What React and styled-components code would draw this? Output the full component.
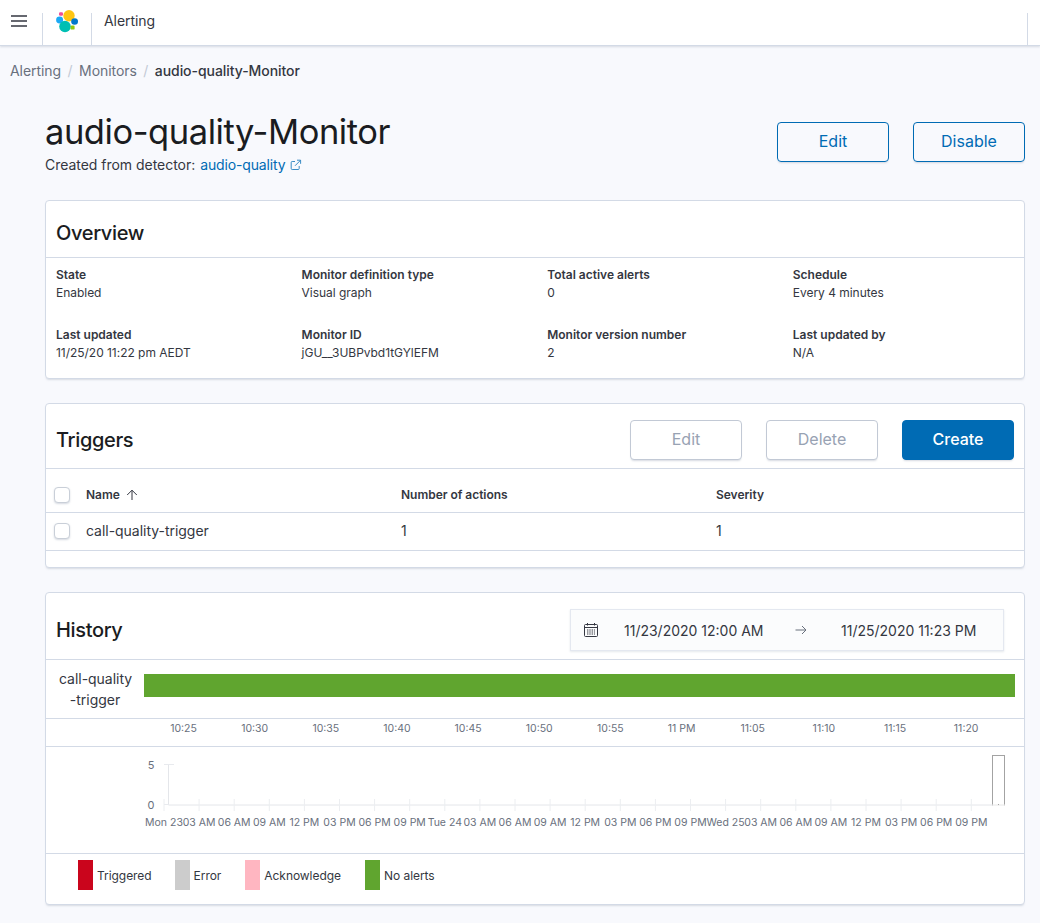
import React from 'react';
import styled, { createGlobalStyle } from 'styled-components';

const Global = createGlobalStyle`
  html, body { margin: 0; padding: 0; background: #f8f9fd; }
  body { font-family: Inter, "Noto Sans", sans-serif; color: #343741; -webkit-font-smoothing: antialiased; }
  * { box-sizing: border-box; }
`;

const Page = styled.div`width: 1040px; height: 923px; overflow: hidden; background: #f8f9fd;`;

const Header = styled.header`
  height: 46px; background: #fff; border-bottom: 1px solid #d3dae6;
  box-shadow: 0 1px 2px rgba(152,162,179,.35); display: flex; align-items: stretch;
`;
const HeaderCell = styled.div`
  width: ${p => p.$w}px; margin-top: 13px; border-right: 1px solid #d3dae6;
  display: flex; align-items: flex-start; justify-content: ${p => p.$start ? 'flex-start' : 'center'};
  padding-left: ${p => p.$start ? 11 : 0}px;
`;
const HeaderTitle = styled.div`
  flex: 1; font-size: 14px; line-height: 17px; padding-left: 12px; color: #343741; letter-spacing: -0.05px;
  border-right: 1px solid #d3dae6; margin-top: 13px; margin-right: 12px;
`;
const HeaderText = styled.span`display: block; margin-top: -1px;`;

const Crumbs = styled.nav`display: flex; align-items: center; padding: 15px 10px 0; font-size: 14px; line-height: 17px; color: #69707d; height: 34px; letter-spacing: -0.06px;`;
const Crumb = styled.span`color: ${p => p.$cur ? '#343741' : '#69707d'}; font-weight: ${p => p.$cur ? 500 : 400};`;
const Slash = styled.span`color: #c2c9d5; margin: 0 6.5px; font-size: 14px;`;

const Main = styled.main`padding: 0 15px 0 45px;`;

const TitleRow = styled.div`display: flex; justify-content: space-between; align-items: flex-start; padding-top: 29px; height: 120px;`;
const TitleBlock = styled.div`display: flex; flex-direction: column; margin-top: 1px;`;
const H1 = styled.h1`margin: 0; font-size: 34.5px; line-height: 44px; font-weight: 400; color: #1a1c21; letter-spacing: -0.45px;`;
const Sub = styled.div`font-size: 14px; line-height: 18px; margin-top: 2px; color: #343741; display: flex; align-items: center; letter-spacing: -0.03px;`;
const Link = styled.a`color: #006bb4; margin-left: 5px; letter-spacing: -0.15px;`;
const Actions = styled.div`display: flex; gap: 24px; padding-top: 14px; margin-top: -1px;`;

const Btn = styled.button`
  width: 112px; height: 40px; border-radius: 4px; font: 400 16px Inter, sans-serif; padding: 0 0 2px;
  background: ${p => p.$fill ? '#006bb4' : p.$disabled ? '#fff' : 'transparent'};
  color: ${p => p.$fill ? '#fff' : p.$disabled ? '#98a2b3' : '#006bb4'};
  font-weight: ${p => p.$fill ? 500 : 400};
  border: 1px solid ${p => p.$fill ? '#006bb4' : p.$disabled ? '#c2c9d5' : '#006bb4'};
  box-shadow: 0 2px 2px -1px rgba(152,162,179,.4);
`;

const Card = styled.section`
  background: #fff; border: 1px solid #d3dae6; border-radius: 4px; margin-bottom: ${p => p.$mb}px;
  box-shadow: 0 2px 2px -1px rgba(152,162,179,.35);
`;
const CardHead = styled.div`
  height: ${p => p.$h}px; display: flex; align-items: center; justify-content: space-between;
  padding: ${p => p.$pad || '8px 10px 0'}; border-bottom: 1px solid #d3dae6;
`;
const H2 = styled.h2`margin: 0; font-size: 20px; line-height: 26px; font-weight: 500; color: #1a1c21; letter-spacing: -0.35px;`;

const OverviewGrid = styled.div`
  display: grid; grid-template-columns: repeat(4, 245.6px); grid-auto-rows: 60px; padding: 8px 10px; height: 120px;
`;
const Field = styled.div`font-size: 12px; line-height: 18px;`;
const FieldLabel = styled.div`font-weight: 600; color: #343741;`;
const FieldValue = styled.div`color: #343741; letter-spacing: -0.03px;`;

const BtnRow = styled.div`display: flex; gap: 24px;`;

const TableRow = styled.div`
  display: grid; grid-template-columns: 40px 315px 315px 1fr; align-items: center;
  height: ${p => p.$h}px; border-bottom: 1px solid #d3dae6; font-size: ${p => p.$head ? 12 : 14}px;
  padding: ${p => p.$head ? '8px 0 0' : '0 0 2px'};
  font-weight: ${p => p.$head ? 600 : 400}; color: #343741; letter-spacing: -0.03px;
`;
const CheckCell = styled.div`padding-left: 8px; display: flex; align-items: center;`;
const Check = styled.span`
  width: 16px; height: 16px; border: 1px solid #c9cfd8; border-radius: 4px; background: #fff; display: block;
  box-shadow: 0 1px 2px rgba(152,162,179,.4);
`;
const NameHead = styled.div`display: flex; align-items: center; gap: 6px;`;
const TableEnd = styled.div`height: 16px;`;

const DatePicker = styled.div`
  width: 434px; height: 42px; background: #fbfcfd; border: 1px solid #e4e8f0; display: flex; align-items: center;
  font-size: 14px; color: #343741; box-shadow: 0 1px 2px rgba(152,162,179,.25);
`;
const DateIcon = styled.div`width: 53px; display: flex; padding-left: 12px;`;
const DateText = styled.div`width: 139px; white-space: nowrap;`;
const DateArrow = styled.div`width: 78px; display: flex; padding-left: 32px;`;

const Timeline = styled.div`height: 59px; display: flex; align-items: flex-start; padding-top: 8px; border-bottom: 1px solid #d3dae6;`;
const TimelineLabel = styled.div`width: 98px; font-size: 14px; line-height: 21px; color: #343741; text-align: center; flex: none; padding: 0 13px; white-space: nowrap; letter-spacing: -0.03px;`;
const TimelineBar = styled.div`height: 23px; width: 871px; background: #60a52f; flex: none; margin-top: 6px;`;
const ChartWrap = styled.div`height: ${p => p.$h}px; border-bottom: 1px solid #d3dae6;`;
const ChartSvg = styled.svg`display: block; font-family: Inter, sans-serif;`;

const Legend = styled.div`display: flex; align-items: flex-start; height: 50px; padding: 6px 0 0 32px; font-size: 12px; color: #343741; letter-spacing: -0.05px;`;
const LegendItem = styled.div`display: flex; align-items: center; margin-right: ${p => p.$mr}px;`;
const Swatch = styled.span`width: 15px; height: 30px; background: ${p => p.$c}; margin-right: 4px; display: block;`;

const Logo = () => (
  <svg width="24" height="24" viewBox="0 0 24 24" style={{ marginTop: -4 }}>
    <circle cx="14" cy="6.8" r="5.7" fill="#fec514" />
    <ellipse cx="4.6" cy="11" rx="3.5" ry="3.4" fill="#1ba9f5" />
    <ellipse cx="19.6" cy="12.5" rx="3.4" ry="3.3" fill="#0077cc" />
    <circle cx="10" cy="17.5" r="5.8" fill="#00bfb3" />
    <rect x="4" y="3.2" width="4" height="3.6" rx="1.2" fill="#f04e98" />
    <rect x="15.6" y="16.6" width="4" height="4" rx="1.2" fill="#93c90e" />
  </svg>
);

const Burger = () => (
  <svg width="16" height="12" viewBox="0 0 16 12" style={{ marginTop: 2 }}>
    <path d="M0 1h16M0 6h16M0 11h16" stroke="#343741" strokeWidth="1.4" />
  </svg>
);

const ExtLink = () => (
  <svg width="12" height="12" viewBox="0 0 12 12" fill="none" stroke="#006bb4" strokeWidth="0.9" style={{ marginLeft: 5, opacity: .85 }}>
    <path d="M5 2.5H2.2a1 1 0 0 0-1 1v6a1 1 0 0 0 1 1h6a1 1 0 0 0 1-1V7" />
    <path d="M7 1.2h3.6v3.6M10.4 1.4 5 6.8" />
  </svg>
);

const SortUp = () => (
  <svg width="12" height="12" viewBox="0 0 12 12" fill="none" stroke="#343741" strokeWidth="1">
    <path d="M6 11V1.2M1.2 6 6 1.2 10.8 6" />
  </svg>
);

const Calendar = () => (
  <svg width="16" height="16" viewBox="0 0 16 16" fill="none" stroke="#343741" strokeWidth="1">
    <rect x="1.5" y="2.5" width="13" height="12" rx="1" />
    <path d="M1.5 5.5h13M4.5 1v2.5M11.5 1v2.5" />
    <path d="M4 8h8M4 10h8M4 12h8" strokeDasharray="1.4 .9" />
  </svg>
);

const ArrowRight = () => (
  <svg width="12" height="10" viewBox="0 0 12 10" fill="none" stroke="#69707d" strokeWidth="1">
    <path d="M0.5 5h10.5M7 1l4 4-4 4" />
  </svg>
);

const topLabels = ['10:25','10:30','10:35','10:40','10:45','10:50','10:55','11 PM','11:05','11:10','11:15','11:20'];
const TopAxis = () => (
  <ChartSvg width="978" height="27">
    {topLabels.map((t, i) => (
      <text key={t} x={137.5 + i * 71.15} y="13" textAnchor="middle" fontSize="10.5" fill="#69707d">{t}</text>
    ))}
  </ChartSvg>
);

const days = ['Mon 23','03 AM','06 AM','09 AM','12 PM','03 PM','06 PM','09 PM','Tue 24','03 AM','06 AM','09 AM','12 PM','03 PM','06 PM','09 PM','Wed 25','03 AM','06 AM','09 AM','12 PM','03 PM','06 PM','09 PM'];
const BottomAxis = () => {
  const x0 = 118;
  const base = 58;
  return (
    <ChartSvg width="978" height="106">
      <path d={`M122.5 18V${base}H${958}`} stroke="#e4e6ea" strokeWidth="1" fill="none" />
      <path d={`M118 17.5h10M118 ${base - 0.5}h5`} stroke="#e8eaee" strokeWidth="1" fill="none" />
      {days.map((d, i) => (
        <line key={i} x1={x0 + i * 35.1} x2={x0 + i * 35.1} y1={base - 6} y2={base + 6} stroke="#eceef1" strokeWidth="1" />
      ))}
      <text x="105" y="22" textAnchor="middle" fontSize="11" fill="#69707d">5</text>
      <text x="105" y="62" textAnchor="middle" fontSize="11" fill="#69707d">0</text>
      {days.map((d, i) => (
        <text key={i} x={x0 + i * 35.1} y="79" textAnchor="middle" fontSize="10.5" fill="#69707d">{d}</text>
      ))}
      <rect x="946.5" y="8.5" width="12" height="49.5" fill="#fff" stroke="#a3a3a3" strokeWidth="1" />
      <line x1="946.5" x2="958.5" y1="58" y2="58" stroke="#fff" strokeWidth="1.5" />
      <line x1="952" x2="953" y1="57.5" y2="57.5" stroke="#a3a3a3" strokeWidth="1" />
    </ChartSvg>
  );
};

export default function App() {
  return (
    <Page>
      <Global />
      <Header>
        <HeaderCell $w={43} $start><Burger /></HeaderCell>
        <HeaderCell $w={49}><Logo /></HeaderCell>
        <HeaderTitle><HeaderText>Alerting</HeaderText></HeaderTitle>
      </Header>
      <Crumbs>
        <Crumb>Alerting</Crumb><Slash>/</Slash><Crumb>Monitors</Crumb><Slash>/</Slash><Crumb $cur>audio-quality-Monitor</Crumb>
      </Crumbs>
      <Main>
        <TitleRow>
          <TitleBlock>
            <H1>audio-quality-Monitor</H1>
            <Sub>Created from detector: <Link>audio-quality</Link><ExtLink /></Sub>
          </TitleBlock>
          <Actions><Btn>Edit</Btn><Btn>Disable</Btn></Actions>
        </TitleRow>

        <Card $mb={24}>
          <CardHead $h={57}><H2>Overview</H2></CardHead>
          <OverviewGrid>
            {[
              ['State', 'Enabled'], ['Monitor definition type', 'Visual graph'], ['Total active alerts', '0'], ['Schedule', 'Every 4 minutes'],
              ['Last updated', '11/25/20 11:22 pm AEDT'], ['Monitor ID', 'jGU__3UBPvbd1tGYlEFM'], ['Monitor version number', '2'], ['Last updated by', 'N/A'],
            ].map(([l, v]) => (
              <Field key={l}><FieldLabel>{l}</FieldLabel><FieldValue>{v}</FieldValue></Field>
            ))}
          </OverviewGrid>
        </Card>

        <Card $mb={24}>
          <CardHead $h={65}>
            <H2>Triggers</H2>
            <BtnRow><Btn $disabled>Edit</Btn><Btn $disabled>Delete</Btn><Btn $fill>Create</Btn></BtnRow>
          </CardHead>
          <TableRow $head $h={44}>
            <CheckCell><Check /></CheckCell>
            <NameHead>Name <SortUp /></NameHead>
            <div>Number of actions</div>
            <div>Severity</div>
          </TableRow>
          <TableRow $h={38}>
            <CheckCell><Check /></CheckCell>
            <div>call-quality-trigger</div>
            <div>1</div>
            <div>1</div>
          </TableRow>
          <TableEnd />
        </Card>

        <Card $mb={0}>
          <CardHead $h={67} $pad="8px 20px 0 10px">
            <H2>History</H2>
            <DatePicker>
              <DateIcon><Calendar /></DateIcon>
              <DateText>11/23/2020 12:00 AM</DateText>
              <DateArrow><ArrowRight /></DateArrow>
              <DateText>11/25/2020 11:23 PM</DateText>
            </DatePicker>
          </CardHead>
          <Timeline>
            <TimelineLabel>call-quality<br />-trigger</TimelineLabel>
            <TimelineBar />
          </Timeline>
          <ChartWrap $h={28}><TopAxis /></ChartWrap>
          <ChartWrap $h={107}><BottomAxis /></ChartWrap>
          <Legend>
            <LegendItem $mr={23}><Swatch $c="#ca051c" />Triggered</LegendItem>
            <LegendItem $mr={24}><Swatch $c="#cccccc" />Error</LegendItem>
            <LegendItem $mr={24}><Swatch $c="#ffb6c1" />Acknowledge</LegendItem>
            <LegendItem $mr={0}><Swatch $c="#60a52f" />No alerts</LegendItem>
          </Legend>
        </Card>
      </Main>
    </Page>
  );
}
